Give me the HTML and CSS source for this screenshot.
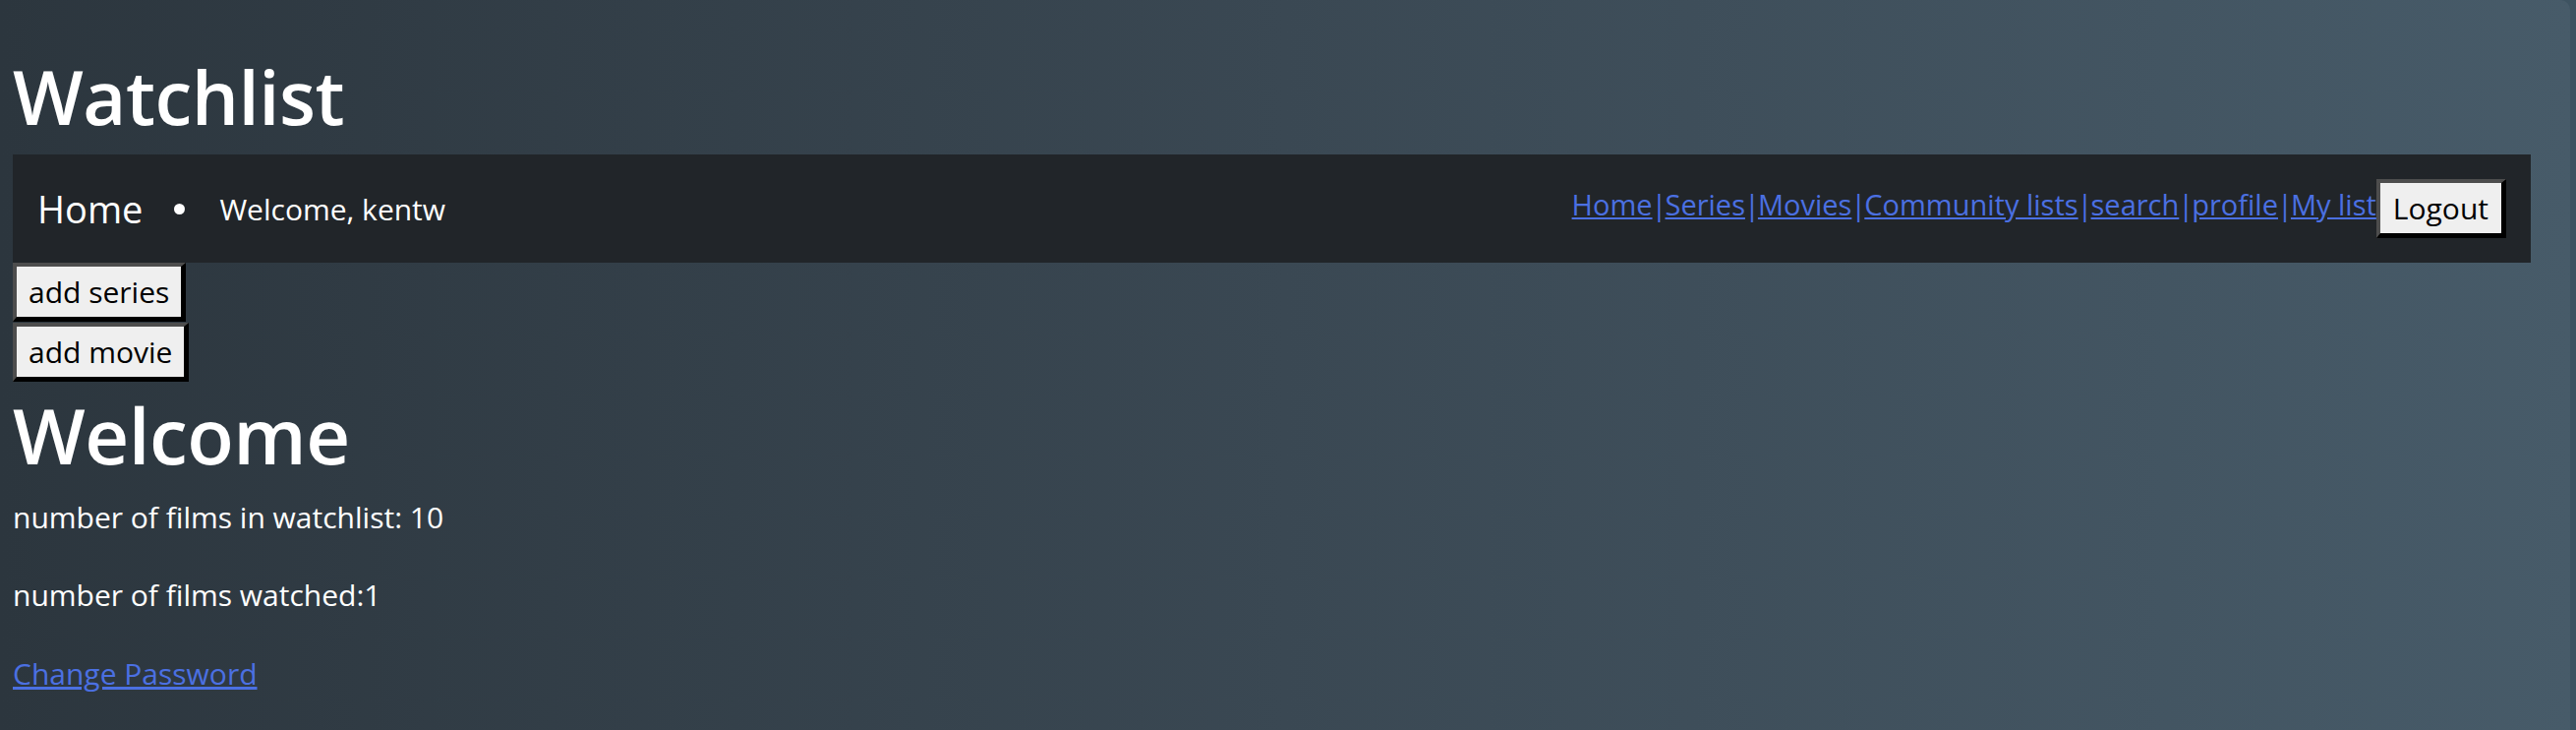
FILE: index.html
```html
<!DOCTYPE html>
<html lang="en">
<head>
<meta charset="utf-8">
<title>Watchlist</title>
<link rel="stylesheet" href="styles.css">
</head>
<body>
<div class="page">
  <h1 class="title">Watchlist</h1>
  <nav class="navbar">
    <div class="nav-left">
      <a class="brand">Home</a>
      <span class="dot"></span>
      <span class="welcome">Welcome, kentw</span>
    </div>
    <div class="nav-right">
      <span class="links"><a href="#">Home</a><span class="sep">|</span><a href="#">Series</a><span class="sep">|</span><a href="#">Movies</a><span class="sep">|</span><a href="#">Community lists</a><span class="sep">|</span><a href="#">search</a><span class="sep">|</span><a href="#">profile</a><span class="sep">|</span><a href="#">My list</a></span>
      <button class="btn logout">Logout</button>
    </div>
  </nav>
  <div class="row"><button class="btn">add series</button></div>
  <div class="row"><button class="btn">add movie</button></div>
  <h1 class="heading">Welcome</h1>
  <p class="stat">number of films in watchlist: 10</p>
  <p class="stat">number of films watched:1</p>
  <a class="link" href="#">Change Password</a>
</div>
</body>
</html>
```

FILE: styles.css
```css
html, body {
  margin: 0;
  padding: 0;
  height: 100%;
}
body {
  background: #3e5361;
  font-family: "Open Sans", "Noto Sans", sans-serif;
  color: #ffffff;
}
.page {
  box-sizing: border-box;
  height: 742px;
  margin-right: 6px;
  padding: 0 40px 0 13px;
  border-top-right-radius: 10px;
  background: linear-gradient(to right, #2c363e 0%, #3a4853 50%, #475b69 100%);
  overflow: hidden;
}
.title {
  margin: 0 0 9px 0;
  padding-top: 48px;
  font-size: 76px;
  font-weight: 600;
  line-height: 100px;
  letter-spacing: -0.5px;
}
.navbar {
  height: 110px;
  background: #212529;
  display: flex;
  align-items: center;
  justify-content: space-between;
  padding: 0 25px;
  box-sizing: border-box;
}
.nav-left {
  display: flex;
  align-items: center;
}
.brand {
  font-size: 38px;
  color: #ffffff;
}
.dot {
  width: 11px;
  height: 11px;
  border-radius: 50%;
  background: #ffffff;
  margin: 0 35px 0 32px;
}
.welcome {
  font-size: 30px;
}
.nav-right {
  display: flex;
  align-items: center;
}
.links {
  font-size: 29px;
  color: #4b70e2;
  margin-top: -10px;
}
.sep {
  letter-spacing: -2px;
  margin-left: -1px;
}
.links a, .link {
  color: #4b70e2;
  text-decoration: underline;
}
.btn {
  font-family: "Open Sans", "Noto Sans", sans-serif;
  font-size: 30px;
  line-height: 41px;
  color: #000000;
  background: #efefef;
  border-style: solid;
  border-width: 4px 5px 5px 4px;
  border-color: #4d4d4d #000000 #000000 #4d4d4d;
  padding: 5px 12px;
  margin: 0;
  cursor: pointer;
}
.logout {
  height: 60px;
  padding: 5px 13px;
}
.row {
  display: flex;
  height: 61px;
  align-items: flex-start;
}
.row .btn {
  height: 60px;
}
.heading {
  margin: 0;
  font-size: 78px;
  font-weight: 600;
  line-height: 106px;
  letter-spacing: -0.5px;
}
.stat {
  margin: 11px 0 39px 0;
  font-size: 30px;
  line-height: 40px;
}
.stat + .stat {
  margin-top: 0;
  margin-bottom: 40px;
}
.link {
  font-size: 30px;
  line-height: 40px;
}
```
